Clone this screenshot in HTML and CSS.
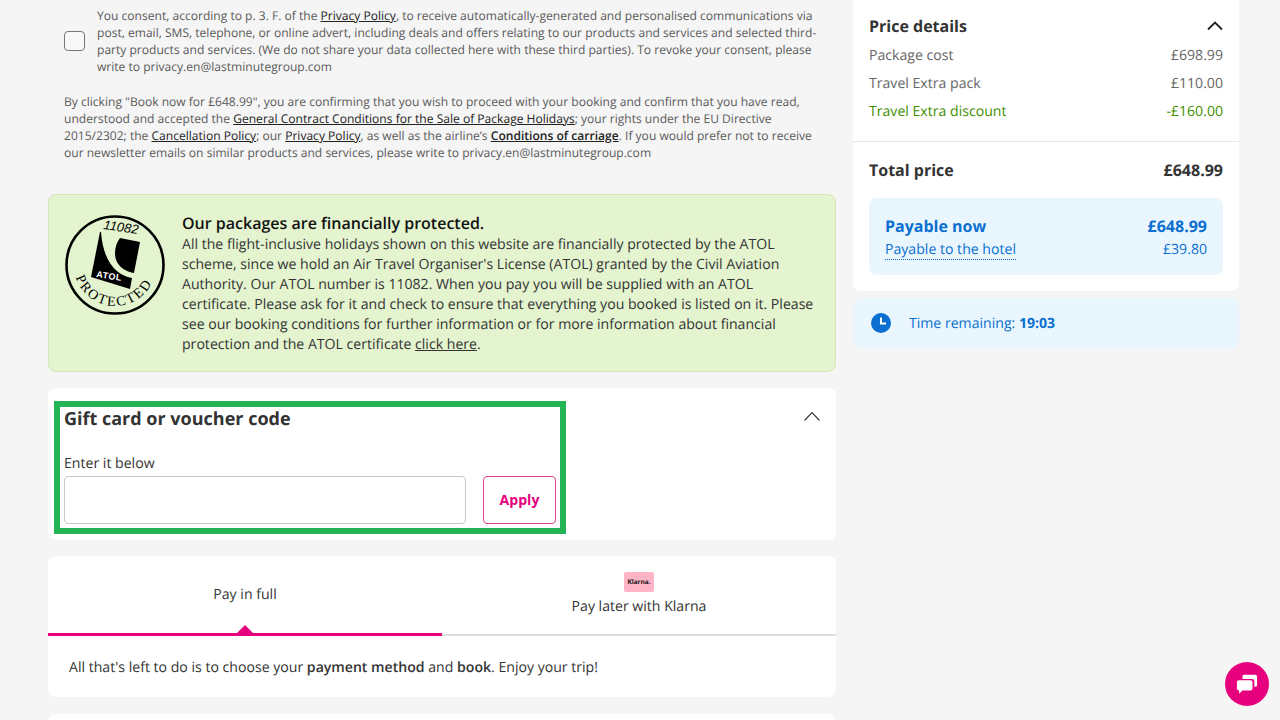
FILE: index.html
```html
<!DOCTYPE html>
<html lang="en">
<head>
<meta charset="utf-8">
<title>Booking</title>
<link rel="stylesheet" href="styles.css">
</head>
<body>
<div class="page">
  <main class="main">
    <div class="consent">
      <span class="checkbox"></span>
      <p class="legal consent-text">You consent, according to p. 3. F. of the <a href="#">Privacy Policy</a>, to receive automatically-generated and personalised communications via post, email, SMS, telephone, or online advert, including deals and offers relating to our products and services and selected third-party products and services. (We do not share your data collected here with these third parties). To revoke your consent, please write to privacy.en@lastminutegroup.com</p>
    </div>
    <p class="legal confirm">By clicking "Book now for £648.99", you are confirming that you wish to proceed with your booking and confirm that you have read, understood and accepted the <a href="#">General Contract Conditions for the Sale of Package Holidays</a>; your rights under the EU Directive 2015/2302; the <a href="#">Cancellation Policy</a>; our <a href="#">Privacy Policy</a>, as well as the airline’s <a href="#" class="strong-link">Conditions of carriage</a>. If you would prefer not to receive our newsletter emails on similar products and services, please write to privacy.en@lastminutegroup.com</p>

    <section class="atol">
      <svg class="atol-logo" viewBox="0 0 100 100" width="100" height="100">
        <defs>
          <path id="atol-arc" d="M9 50 A41 41 0 0 0 91 50"/>
        </defs>
        <circle cx="50" cy="50" r="48.500" fill="none" stroke="#000" stroke-width="2.600"/>
        <path d="M35 17 L26 62 L65 74 L67 63 C50 60 38 45 36 17 Z" fill="#000"/>
        <path d="M55 23 L75 27 L69 58 C62 57 50 52 50 38 C50 32 52 27 55 23 Z" fill="#000"/>
        <text x="38" y="14" class="atol-num" transform="rotate(8 38 14)">11082</text>
        <text x="31" y="62" class="atol-mark" transform="rotate(9 31 62)">ATOL</text>
        <text class="atol-arc"><textPath href="#atol-arc" startOffset="48%" text-anchor="middle">PROTECTED</textPath></text>
      </svg>
      <div class="atol-copy">
        <h2 class="atol-title">Our packages are financially protected.</h2>
        <p class="atol-text">All the flight-inclusive holidays shown on this website are financially protected by the ATOL scheme, since we hold an Air Travel Organiser's License (ATOL) granted by the Civil Aviation Authority. Our ATOL number is 11082. When you pay you will be supplied with an ATOL certificate. Please ask for it and check to ensure that everything you booked is listed on it. Please see our booking conditions for further information or for more information about financial protection and the ATOL certificate <a href="#">click here</a>.</p>
      </div>
    </section>

    <section class="card voucher">
      <div class="voucher-head">
        <h2 class="voucher-title">Gift card or voucher code</h2>
        <svg class="chev" viewBox="0 0 16 10" width="16" height="10"><path d="M0.500 9.500 L8 1.500 L15.500 9.500" fill="none" stroke="#333" stroke-width="1.100"/></svg>
      </div>
      <label class="voucher-label" for="code">Enter it below</label>
      <div class="voucher-row">
        <input id="code" class="voucher-input" type="text">
        <button class="apply" type="button">Apply</button>
      </div>
      <div class="highlight"></div>
    </section>

    <section class="card pay">
      <div class="tabs">
        <div class="tab tab-active">Pay in full</div>
        <div class="tab tab-klarna">
          <span class="klarna">Klarna.</span>
          <span>Pay later with Klarna</span>
        </div>
      </div>
      <p class="pay-text">All that's left to do is to choose your <b>payment method</b> and <b>book</b>. Enjoy your trip!</p>
    </section>

    <section class="card next"></section>
  </main>

  <aside class="side">
    <section class="price">
      <div class="price-top">
        <div class="price-head">
          <h2 class="price-title">Price details</h2>
          <svg class="chev-b" viewBox="0 0 16 10" width="16" height="10"><path d="M1 8.500 L8 1.500 L15 8.500" fill="none" stroke="#222" stroke-width="1.800"/></svg>
        </div>
        <div class="price-row"><span>Package cost</span><span>£698.99</span></div>
        <div class="price-row"><span>Travel Extra pack</span><span>£110.00</span></div>
        <div class="price-row green"><span>Travel Extra discount</span><span>-£160.00</span></div>
      </div>
      <div class="price-bottom">
        <div class="total"><span>Total price</span><span>£648.99</span></div>
        <div class="payable">
          <div class="pay-now"><span>Payable now</span><span>£648.99</span></div>
          <div class="pay-hotel"><span class="dotted">Payable to the hotel</span><span>£39.80</span></div>
        </div>
      </div>
    </section>
    <section class="timer">
      <svg class="clock" viewBox="0 0 20 20" width="20" height="20"><circle cx="10" cy="10" r="10" fill="#0a6fd0"/><path d="M10 4.500 V10.500 H15" fill="none" stroke="#fff" stroke-width="2"/></svg>
      <span>Time remaining: <b>19:03</b></span>
    </section>
  </aside>
</div>
<button class="chat" type="button" aria-label="Chat">
  <svg viewBox="0 0 24 22" width="22" height="22">
    <path d="M9 1 H21 a2 2 0 0 1 2 2 V12 a2 2 0 0 1 -2 2 H20 V8 a2.500 2.500 0 0 0 -2.500 -2.500 H7 V3 a2 2 0 0 1 2 -2 Z" fill="#fff"/>
    <path d="M3 7 H16 a2 2 0 0 1 2 2 V16 a2 2 0 0 1 -2 2 H7 L3.500 21.500 V18 H3 a2 2 0 0 1 -2 -2 V9 a2 2 0 0 1 2 -2 Z" fill="#fff"/>
  </svg>
</button>
</body>
</html>
```

FILE: styles.css
```css
* { box-sizing: border-box; }
html, body { margin: 0; height: 720px; overflow: hidden; }
body { background: #f5f5f5; font-family: "Open Sans", sans-serif; color: #333; text-rendering: geometricPrecision; }
a { color: inherit; }
h2, p { margin: 0; }

.page { display: flex; gap: 17px; padding-left: 48px; align-items: flex-start; }
.main { width: 788px; flex: none; }
.side { width: 386px; flex: none; }

.legal { font-size: 12.070px; line-height: 17.100px; color: #5a5a5a; }
.legal a { color: #222; }
.strong-link { font-weight: 600; }
.consent { display: flex; align-items: center; gap: 12px; padding: 7px 16px 0 16px; }
.checkbox { width: 21px; height: 20px; flex: none; border: 1px solid #777; border-radius: 4px; background: #f8f8f8; }
.consent-text { flex: 1; }
.confirm { padding: 17.500px 16px 0 16px; }

.atol { display: flex; gap: 17px; margin-top: 32.700px; height: 178px; padding: 20px 16px 0 16px; background: #e4f4cf; border: 1px solid #d3e8b5; border-radius: 8px; }
.atol-logo { flex: none; }
.atol-num { font-family: "Liberation Sans", sans-serif; font-size: 13px; font-style: italic; fill: #000; }
.atol-mark { font-family: "Liberation Sans", sans-serif; font-size: 9px; font-weight: 700; fill: #fff; letter-spacing: 0.500px; }
.atol-arc { font-family: "Liberation Serif", serif; font-size: 14px; fill: #000; letter-spacing: 2px; }
.atol-copy { flex: 1; margin-top: -2px; }
.atol-title { font-size: 16px; line-height: 20px; font-weight: 600; color: #111; }
.atol-text { margin-top: 2px; font-size: 14.100px; line-height: 20px; color: #333; }

.card { background: #fff; border-radius: 8px; }
.voucher { position: relative; margin-top: 16px; height: 152px; padding: 19px 16px 0 16px; }
.voucher-head { display: flex; justify-content: space-between; align-items: center; height: 24px; }
.voucher-title { font-size: 18px; line-height: 24px; font-weight: 700; color: #333; }
.chev { margin-top: -6px; }
.voucher-label { display: block; margin-top: 23px; font-size: 14.100px; line-height: 20px; color: #333; }
.voucher-row { display: flex; gap: 17px; margin-top: 2px; width: 492px; }
.voucher-input { width: 402px; height: 48px; border: 1.500px solid #c8c8c8; border-radius: 4px; background: #fff; }
.apply { width: 73px; height: 48px; border: 1.500px solid #e0408f; border-radius: 4px; background: #fff; color: #e6007e; font: 700 14.100px "Open Sans", sans-serif; }
.highlight { position: absolute; left: 6px; top: 13px; width: 512px; height: 133px; border: 6px solid #22b455; pointer-events: none; }

.pay { margin-top: 16px; height: 141px; overflow: hidden; }
.tabs { display: flex; height: 80px; }
.tab { width: 50%; display: flex; flex-direction: column; align-items: center; font-size: 14.100px; line-height: 20px; color: #333; border-bottom: 2px solid #ddd; }
.tab-active { position: relative; justify-content: center; padding-top: 2px; border-bottom: 3px solid #e6007e; }
.tab-active::after { content: ""; position: absolute; left: 50%; bottom: 0; margin-left: -8px; border: 8px solid transparent; border-top: 0; border-bottom-color: #e6007e; }
.tab-klarna { padding-top: 16px; }
.klarna { display: flex; align-items: center; justify-content: center; width: 30px; height: 20px; margin-bottom: 5px; background: #ffb3c7; border-radius: 2px; color: #111; font-size: 6.500px; line-height: 20px; font-weight: 700; }
.pay-text { padding: 22px 21px 0; font-size: 14.100px; line-height: 20px; color: #333; }
.pay-text b { font-weight: 600; }

.next { margin-top: 17px; height: 40px; }

.price { background: #fff; border-radius: 0 0 8px 8px; height: 291px; }
.price-top { height: 142px; padding: 14px 16px 0; border-bottom: 1px solid #e6e6e6; }
.price-head { display: flex; justify-content: space-between; align-items: center; height: 24px; margin-bottom: 4px; }
.price-title { font-size: 16px; line-height: 24px; font-weight: 700; color: #333; }
.price-row { display: flex; justify-content: space-between; height: 28px; font-size: 14.100px; line-height: 28px; color: #666; }
.green { color: #3f8f00; }
.price-bottom { padding: 0 16px; }
.total { display: flex; justify-content: space-between; height: 56px; align-items: center; font-size: 16px; font-weight: 700; color: #333; }
.payable { background: #e9f6fd; border-radius: 8px; height: 77px; padding: 17px 16px 0; color: #0a6fd0; }
.pay-now { display: flex; justify-content: space-between; font-size: 16px; line-height: 22px; font-weight: 700; }
.pay-hotel { display: flex; justify-content: space-between; margin-top: 3px; font-size: 14.100px; line-height: 22px; }
.pay-hotel span:last-child { margin-top: -1px; }
.dotted { border-bottom: 1px dotted #0a6fd0; line-height: 19px; height: 20px; }

.timer { display: flex; align-items: center; gap: 18px; height: 50px; margin-top: 7px; padding-left: 18px; background: #e9f6fd; border-radius: 8px; font-size: 14.100px; color: #0a6fd0; }
.timer b { font-weight: 700; }

.chat { position: fixed; left: 1225px; top: 662px; width: 44px; height: 44px; padding: 0; border: 0; border-radius: 50%; background: #e6007e; display: flex; align-items: center; justify-content: center; }
```
